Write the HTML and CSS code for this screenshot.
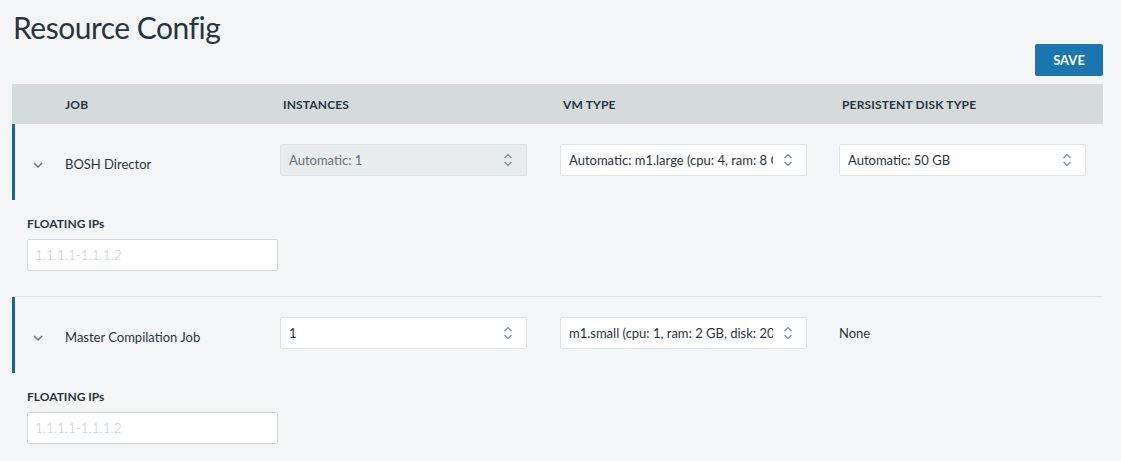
FILE: index.html
```html
<!DOCTYPE html>
<html>
<head>
<meta charset="utf-8">
<link rel="stylesheet" href="styles.css">
</head>
<body>
<div class="page">
  <h1 class="title">Resource Config</h1>
  <div class="actions"><button class="save">SAVE</button></div>
  <div class="table">
    <div class="thead">
      <div class="th th-job">JOB</div>
      <div class="th">INSTANCES</div>
      <div class="th">VM TYPE</div>
      <div class="th">PERSISTENT DISK TYPE</div>
    </div>

    <div class="job">
      <div class="row">
        <div class="cell cell-job">
          <svg class="chev" width="10" height="6" viewBox="0 0 10 6"><path d="M1 1l4 4 4-4" fill="none" stroke="#6b7a85" stroke-width="1.5"/></svg>
          <span>BOSH Director</span>
        </div>
        <div class="cell"><div class="select disabled"><span>Automatic: 1</span><svg class="updown" width="10" height="16" viewBox="0 0 10 16"><path d="M1.5 6l3.5-3.5 3.5 3.5M1.5 10l3.5 3.5 3.5-3.5" fill="none" stroke="#7d8a93" stroke-width="1.2"/></svg></div></div>
        <div class="cell"><div class="select"><span>Automatic: m1.large (cpu: 4, ram: 8 GB, disk: 64 GB)</span><svg class="updown" width="10" height="16" viewBox="0 0 10 16"><path d="M1.5 6l3.5-3.5 3.5 3.5M1.5 10l3.5 3.5 3.5-3.5" fill="none" stroke="#7d8a93" stroke-width="1.2"/></svg></div></div>
        <div class="cell"><div class="select"><span>Automatic: 50 GB</span><svg class="updown" width="10" height="16" viewBox="0 0 10 16"><path d="M1.5 6l3.5-3.5 3.5 3.5M1.5 10l3.5 3.5 3.5-3.5" fill="none" stroke="#7d8a93" stroke-width="1.2"/></svg></div></div>
      </div>
      <div class="extra">
        <label class="label">FLOATING IPs</label>
        <div class="input"><span class="placeholder">1.1.1.1-1.1.1.2</span></div>
      </div>
    </div>

    <div class="job job-second">
      <div class="row">
        <div class="cell cell-job">
          <svg class="chev" width="10" height="6" viewBox="0 0 10 6"><path d="M1 1l4 4 4-4" fill="none" stroke="#6b7a85" stroke-width="1.5"/></svg>
          <span>Master Compilation Job</span>
        </div>
        <div class="cell"><div class="select"><span>1</span><svg class="updown" width="10" height="16" viewBox="0 0 10 16"><path d="M1.5 6l3.5-3.5 3.5 3.5M1.5 10l3.5 3.5 3.5-3.5" fill="none" stroke="#7d8a93" stroke-width="1.2"/></svg></div></div>
        <div class="cell"><div class="select"><span>m1.small (cpu: 1, ram: 2 GB, disk: 20 GB)</span><svg class="updown" width="10" height="16" viewBox="0 0 10 16"><path d="M1.5 6l3.5-3.5 3.5 3.5M1.5 10l3.5 3.5 3.5-3.5" fill="none" stroke="#7d8a93" stroke-width="1.2"/></svg></div></div>
        <div class="cell cell-plain"><span class="plain">None</span></div>
      </div>
      <div class="extra">
        <label class="label">FLOATING IPs</label>
        <div class="input"><span class="placeholder">1.1.1.1-1.1.1.2</span></div>
      </div>
    </div>
  </div>
</div>
</body>
</html>
```

FILE: styles.css
```css
* { box-sizing: border-box; }
html, body { margin: 0; padding: 0; }
body {
  background: #f4f5f7;
  font-family: "Lato", "Open Sans", sans-serif;
  color: #253640;
  width: 1121px;
  height: 461px;
  overflow: hidden;
}
.page {
  padding: 0 18px 0 12px;
}
.title {
  margin: 0;
  padding: 10px 0 0 1px;
  height: 44px;
  font-size: 30px;
  font-weight: 400;
  color: #253640;
  line-height: 34px;
  letter-spacing: -0.5px;
}
.actions {
  display: flex;
  justify-content: flex-end;
  height: 40px;
}
.save {
  width: 68px;
  height: 32px;
  background: #1b75b0;
  border: none;
  border-radius: 2px;
  color: #fff;
  font-family: inherit;
  font-weight: 700;
  font-size: 13px;
  padding: 0;
}
.thead {
  display: grid;
  grid-template-columns: 268px 280px 279px 1fr;
  height: 40px;
  align-items: center;
  background: #d5dadb;
}
.th {
  font-size: 12px;
  font-weight: 700;
  color: #253640;
  padding-left: 3px;
  letter-spacing: 0.15px;
}
.th.th-job { padding-left: 53px; }
.job-second { border-top: 1px solid #dde3e7; }
.row {
  display: grid;
  grid-template-columns: 265px 280px 279px 1fr;
  height: 76px;
  align-items: start;
  padding-top: 20px;
  border-left: 3px solid #15679c;
}
.cell-job {
  display: flex;
  align-items: center;
  height: 32px;
  margin-top: 4px;
  padding-left: 18px;
  font-size: 13px;
  color: #253640;
}
.chev { margin-right: 22px; margin-top: 1px; }
.select {
  width: 247px;
  height: 32px;
  background: #fff;
  border: 1px solid #dfe3e6;
  border-radius: 2px;
  display: flex;
  align-items: center;
  padding: 0 13px 0 8px;
  font-size: 13px;
  color: #253640;
}
.select span {
  flex: 1;
  white-space: nowrap;
  overflow: hidden;
  margin-right: 10px;
}
.select.disabled {
  background: #e9eced;
  color: #65737c;
}
.cell-plain {
  display: flex;
  align-items: center;
  height: 32px;
}
.plain { font-size: 13px; color: #253640; }
.extra {
  padding: 17px 0 25px 15px;
}
.label {
  display: block;
  font-size: 12px;
  font-weight: 700;
  color: #253640;
  line-height: 14px;
  margin-bottom: 8px;
}
.input {
  width: 251px;
  height: 32px;
  background: #fff;
  border: 1px solid #d3d8db;
  border-radius: 2px;
  display: flex;
  align-items: center;
  padding-left: 7px;
}
.placeholder {
  font-size: 13.5px;
  color: #c3c8cc;
  font-weight: 300;
}
```
